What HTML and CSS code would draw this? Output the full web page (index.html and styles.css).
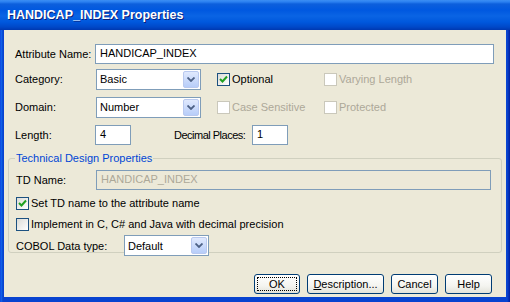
FILE: index.html
```html
<!DOCTYPE html>
<html lang="en">
<head>
    <meta charset="UTF-8">
    <title>HANDICAP_INDEX Properties</title>
    <link rel="stylesheet" href="styles.css">
</head>
<body>
    <div class="window">
        <div class="titlebar">HANDICAP_INDEX Properties</div>
        <div class="client">
            <div class="row row-name">
                <label class="lbl">Attribute Name:</label>
                <div class="textbox wide">HANDICAP_INDEX</div>
            </div>
            <div class="row row-cat">
                <label class="lbl">Category:</label>
                <div class="combo">
                    <span>Basic</span>
                    <span class="drop"><svg width="8" height="5" viewBox="0 0 8 5"><path d="M0.5 0.5 L4 4 L7.5 0.5" fill="none" stroke="#4d6185" stroke-width="1.8"/></svg></span>
                </div>
                <div class="check on first"><span class="box"><svg width="9" height="9" viewBox="0 0 9 9"><path d="M1 4 L3.5 6.5 L8 1.5" fill="none" stroke="#21a121" stroke-width="2"/></svg></span>Optional</div>
                <div class="check off second"><span class="box"></span>Varying Length</div>
            </div>
            <div class="row row-dom">
                <label class="lbl">Domain:</label>
                <div class="combo">
                    <span>Number</span>
                    <span class="drop"><svg width="8" height="5" viewBox="0 0 8 5"><path d="M0.5 0.5 L4 4 L7.5 0.5" fill="none" stroke="#4d6185" stroke-width="1.8"/></svg></span>
                </div>
                <div class="check off first"><span class="box"></span>Case Sensitive</div>
                <div class="check off second"><span class="box"></span>Protected</div>
            </div>
            <div class="row row-len">
                <label class="lbl">Length:</label>
                <div class="textbox short">4</div>
                <label class="lbl-dec">Decimal Places:</label>
                <div class="textbox short">1</div>
            </div>

            <fieldset class="group">
                <legend>Technical Design Properties</legend>
                <div class="row row-td">
                    <label class="lbl">TD Name:</label>
                    <div class="textbox wide disabled">HANDICAP_INDEX</div>
                </div>
                <div class="check on line"><span class="box"><svg width="9" height="9" viewBox="0 0 9 9"><path d="M1 4 L3.5 6.5 L8 1.5" fill="none" stroke="#21a121" stroke-width="2"/></svg></span>Set TD name to the attribute name</div>
                <div class="check line2"><span class="box"></span>Implement in C, C# and Java with decimal precision</div>
                <div class="row row-cobol">
                    <label class="lbl-cobol">COBOL Data type:</label>
                    <div class="combo small">
                        <span>Default</span>
                        <span class="drop"><svg width="8" height="5" viewBox="0 0 8 5"><path d="M0.5 0.5 L4 4 L7.5 0.5" fill="none" stroke="#4d6185" stroke-width="1.8"/></svg></span>
                    </div>
                </div>
            </fieldset>

            <div class="buttons">
                <button class="btn ok"><span class="focus">OK</span></button>
                <button class="btn desc"><u>D</u>escription...</button>
                <button class="btn">Cancel</button>
                <button class="btn">Help</button>
            </div>
        </div>
    </div>
</body>
</html>
```

FILE: styles.css
```css
body {
    margin: 0;
    background: #0a2fc4;
    font-family: "Liberation Sans", Arial, sans-serif;
    font-size: 11px;
    color: #000;
}

.window {
    width: 510px;
    height: 302px;
    box-sizing: border-box;
    display: flex;
    flex-direction: column;
    background: linear-gradient(to right, #0831d9 0, #166aee 1px, #0855dd 2px, #0843d0 3px, #0843d0 506px, #0a47d3 507px, #001ea0 510px);
}

.titlebar {
    height: 30px;
    flex: none;
    box-sizing: border-box;
    padding: 8px 0 0 7px;
    color: #fff;
    font-weight: bold;
    font-size: 12.5px;
    text-shadow: 1px 1px 0 #0a1e7a;
    background: linear-gradient(to bottom, #3c8ef3 0, #2a7ff0 2px, #0d5fdc 4px, #0058e0 10px, #0a64e4 16px, #0058dd 22px, #0048c8 27px, #0038b0 30px);
}

.client {
    flex: 1;
    margin: 0 4px 5px 4px;
    background: #ece9d8;
    padding: 14px 12px 0 11px;
    display: flex;
    flex-direction: column;
}

.row {
    display: flex;
    align-items: center;
}

.lbl {
    width: 80px;
    flex: none;
}

.textbox {
    box-sizing: border-box;
    height: 20px;
    border: 1px solid #7f9db9;
    background: #fff;
    padding: 2px 0 0 4px;
}

.textbox.wide {
    flex: 1;
}

.textbox.short {
    width: 36px;
}

.textbox.disabled {
    background: #ece9d8;
    color: #aca899;
}

.row-cat {
    margin-top: 4px;
    height: 22px;
}

.row-dom {
    margin-top: 6px;
    height: 22px;
}

.row-len {
    margin-top: 6px;
    height: 21px;
}

.lbl-dec {
    margin-left: 43px;
    width: 78px;
    flex: none;
    white-space: nowrap;
    letter-spacing: -0.5px;
}

.combo {
    box-sizing: border-box;
    width: 105px;
    height: 21px;
    margin-left: 1px;
    border: 1px solid #7f9db9;
    background: #fff;
    display: flex;
    align-items: center;
    justify-content: space-between;
    padding: 0 1px 0 3px;
}

.combo.small {
    width: 85px;
}

.drop {
    width: 16px;
    height: 17px;
    box-sizing: border-box;
    border: 1px solid #b9c9ef;
    border-radius: 2px;
    background: linear-gradient(to bottom, #e0e9fd, #b7cdf9);
    display: flex;
    align-items: center;
    justify-content: center;
}

.check {
    display: flex;
    align-items: center;
}

.check .box {
    box-sizing: border-box;
    width: 13px;
    height: 13px;
    margin-right: 2px;
    border: 1px solid #1c5180;
    background: linear-gradient(135deg, #dcdcd7, #fff);
    display: flex;
    align-items: center;
    justify-content: center;
}

.check.off {
    color: #aca899;
}

.check.off .box {
    border-color: #cac8bb;
    background: #fff;
}

.check.first {
    margin-left: 16px;
    width: 107px;
}

.group {
    margin: 7px -8px 0 -7px;
    padding: 6px 10px 3px 7px;
    border: 1px solid #d0d0bf;
    border-radius: 3px;
    height: 101px;
    box-sizing: border-box;
}

.group legend {
    color: #0046d5;
    padding: 0 1px;
    margin-left: -1px;
}

.row-td {
    height: 20px;
}

.check.line {
    margin-top: 6px;
    height: 14px;
}

.check.line2 {
    margin-top: 7px;
    height: 14px;
}

.row-cobol {
    margin-top: 4px;
    height: 21px;
}

.lbl-cobol {
    width: 107px;
    flex: none;
}

.buttons {
    display: flex;
    justify-content: flex-end;
    gap: 7px;
    margin-top: 21px;
    padding-right: 2px;
}

.btn {
    font-family: "Liberation Sans", Arial, sans-serif;
    font-size: 11px;
    height: 20px;
    width: 47px;
    padding: 0;
    border: 1px solid #003c74;
    border-radius: 3px;
    background: linear-gradient(to bottom, #fff 0, #f4f4f0 60%, #e3e2da 100%);
    color: #000;
}

.btn.ok {
    width: 46px;
    padding: 2px;
}

.btn.ok .focus {
    display: block;
    height: 100%;
    box-sizing: border-box;
    border: 1px dotted #000;
    line-height: 12px;
}

.btn.desc {
    width: 77px;
}
```
